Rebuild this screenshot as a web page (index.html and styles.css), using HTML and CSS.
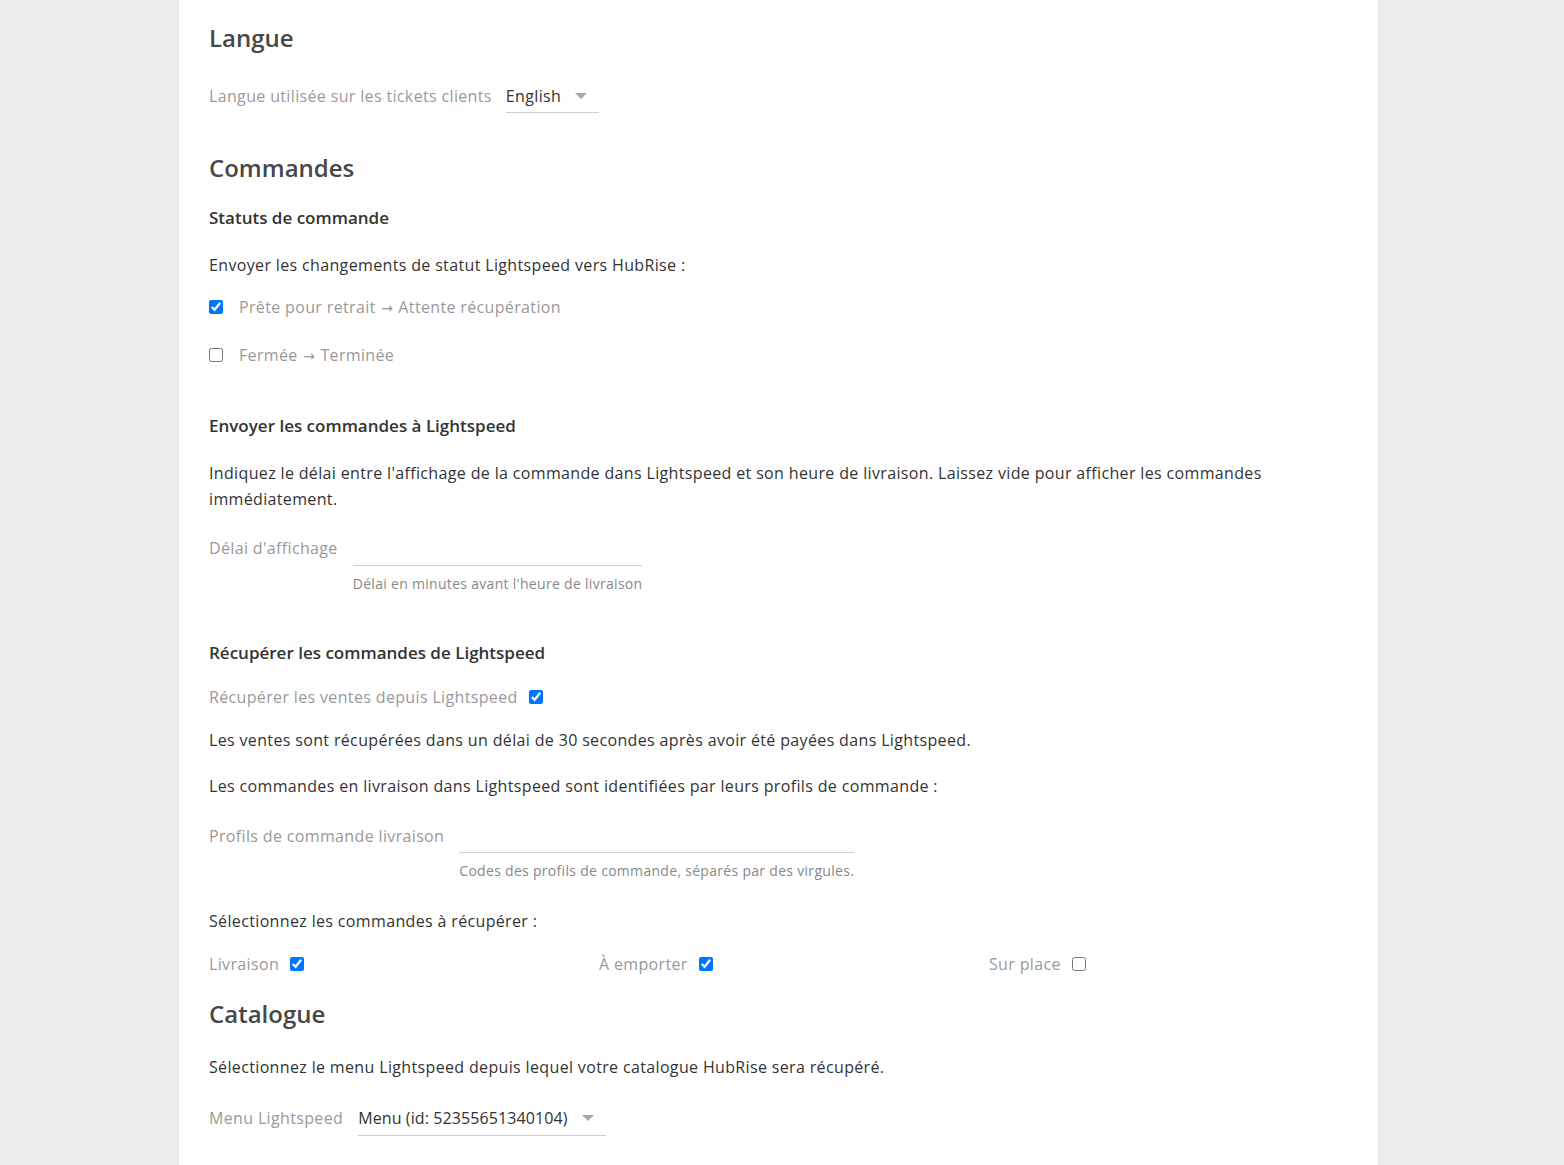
FILE: index.html
```html
<!DOCTYPE html>
<html lang="fr">
<head>
<meta charset="utf-8">
<title>Configuration</title>
<link rel="stylesheet" href="styles.css">
</head>
<body>
<main class="panel">
  <h2 class="title t-langue">Langue</h2>
  <div class="field f-langue">
    <span class="field-label">Langue utilisée sur les tickets clients</span>
    <div class="select">
      <span class="select-value">English</span>
      <span class="caret"></span>
    </div>
  </div>

  <h2 class="title t-commandes">Commandes</h2>
  <h3 class="subtitle s-statuts">Statuts de commande</h3>
  <p class="text p-envoyer">Envoyer les changements de statut Lightspeed vers HubRise :</p>
  <label class="check-row c-1"><input type="checkbox" checked><span>Prête pour retrait <span class="arrow">→</span> Attente récupération</span></label>
  <label class="check-row c-2"><input type="checkbox"><span>Fermée <span class="arrow">→</span> Terminée</span></label>

  <h3 class="subtitle s-envoyer">Envoyer les commandes à Lightspeed</h3>
  <p class="text p-indiquez">Indiquez le délai entre l'affichage de la commande dans Lightspeed et son heure de livraison. Laissez vide pour afficher les commandes immédiatement.</p>
  <div class="field f-delai">
    <span class="field-label">Délai d'affichage</span>
    <div class="input-wrap">
      <div class="input-line l-delai"></div>
      <div class="help">Délai en minutes avant l'heure de livraison</div>
    </div>
  </div>

  <h3 class="subtitle s-recuperer">Récupérer les commandes de Lightspeed</h3>
  <label class="inline-check c-ventes"><span>Récupérer les ventes depuis Lightspeed</span><input type="checkbox" checked></label>
  <p class="text p-ventes">Les ventes sont récupérées dans un délai de 30 secondes après avoir été payées dans Lightspeed.</p>
  <p class="text p-livraison">Les commandes en livraison dans Lightspeed sont identifiées par leurs profils de commande :</p>
  <div class="field f-profils">
    <span class="field-label">Profils de commande livraison</span>
    <div class="input-wrap">
      <div class="input-line l-profils"></div>
      <div class="help">Codes des profils de commande, séparés par des virgules.</div>
    </div>
  </div>
  <p class="text p-select">Sélectionnez les commandes à récupérer :</p>
  <div class="cols">
    <label class="inline-check"><span>Livraison</span><input type="checkbox" checked></label>
    <label class="inline-check"><span>À emporter</span><input type="checkbox" checked></label>
    <label class="inline-check"><span>Sur place</span><input type="checkbox"></label>
  </div>

  <h2 class="title t-catalogue">Catalogue</h2>
  <p class="text p-catalogue">Sélectionnez le menu Lightspeed depuis lequel votre catalogue HubRise sera récupéré.</p>
  <div class="field f-menu">
    <span class="field-label">Menu Lightspeed</span>
    <div class="select">
      <span class="select-value">Menu (id: 52355651340104)</span>
      <span class="caret"></span>
    </div>
  </div>
</main>
</body>
</html>
```

FILE: styles.css
```css
html, body {
  margin: 0;
  padding: 0;
  background: #ececec;
}

body {
  font-family: "Open Sans", "Noto Sans", sans-serif;
  font-size: 16px;
  letter-spacing: 0.35px;
  color: #333;
}

.panel {
  display: flex;
  flex-direction: column;
  align-items: flex-start;
  width: 1201px;
  margin-left: 178px;
  background: #fff;
  padding: 18px 30px 30px;
  min-height: 1165px;
  box-sizing: border-box;
  border-left: 1px solid #e6e6e6;
  border-right: 1px solid #e6e6e6;
}

.title {
  margin: 0;
  font-size: 24px;
  font-weight: 600;
  letter-spacing: 0;
  color: #474747;
  line-height: 40px;
}

.subtitle {
  margin: 0;
  font-size: 17px;
  font-weight: 600;
  letter-spacing: 0;
  color: #333;
  line-height: 28px;
}

.text {
  margin: 0;
  line-height: 26px;
  color: #333;
}

.field {
  display: flex;
  align-items: flex-start;
  line-height: 26px;
}

.field-label {
  color: #999;
  margin-right: 15px;
  white-space: nowrap;
}

.f-langue .field-label { margin-right: 14px; }

.select {
  display: flex;
  align-items: center;
  border-bottom: 1px solid #cfcfcf;
  padding-bottom: 3px;
  color: #333;
}

.f-menu .select-value { letter-spacing: 0.1px; }

.caret {
  margin-left: 14px;
  margin-right: 12px;
  width: 0;
  height: 0;
  border-left: 6px solid transparent;
  border-right: 6px solid transparent;
  border-top: 6px solid #a8a8a8;
}

.check-row {
  display: flex;
  align-items: center;
  height: 26px;
  color: #999;
  line-height: 26px;
}

.check-row input {
  margin: 0 16px 0 0;
  width: 14px;
  height: 14px;
}

.arrow {
  font-family: "DejaVu Sans", sans-serif;
  font-size: 14px;
  line-height: 0;
  letter-spacing: 0;
  padding: 0 1px;
}

.inline-check {
  display: flex;
  align-items: center;
  color: #999;
  line-height: 26px;
}

.inline-check input {
  margin: 0 0 0 11px;
  width: 14px;
  height: 14px;
}

.input-wrap {
  display: flex;
  flex-direction: column;
}

.input-line {
  border-bottom: 1px solid #cfcfcf;
}

.l-delai { height: 30px; }
.l-profils { height: 29px; }

.help {
  margin-top: 8px;
  font-size: 14px;
  letter-spacing: 0.3px;
  color: #888;
  line-height: 20px;
  white-space: nowrap;
}

.cols {
  display: grid;
  grid-template-columns: repeat(3, 390px);
}

/* vertical rhythm */
.f-langue { margin-top: 25px; }
.t-commandes { margin-top: 35px; }
.s-statuts { margin-top: 16px; }
.p-envoyer { margin-top: 20px; }
.c-1 { margin-top: 16px; }
.c-2 { margin-top: 22px; }
.s-envoyer { margin-top: 44px; }
.p-indiquez { margin-top: 20px; }
.f-delai { margin-top: 23px; }
.s-recuperer { margin-top: 45px; }
.c-ventes { margin-top: 17px; }
.p-ventes { margin-top: 17px; }
.p-livraison { margin-top: 20px; }
.f-profils { margin-top: 24px; }
.p-select { margin-top: 27px; }
.cols { margin-top: 17px; }
.t-catalogue { margin-top: 17px; }
.p-catalogue { margin-top: 20px; }
.f-menu { margin-top: 25px; }
.f-menu .select { padding-bottom: 4px; }
```
